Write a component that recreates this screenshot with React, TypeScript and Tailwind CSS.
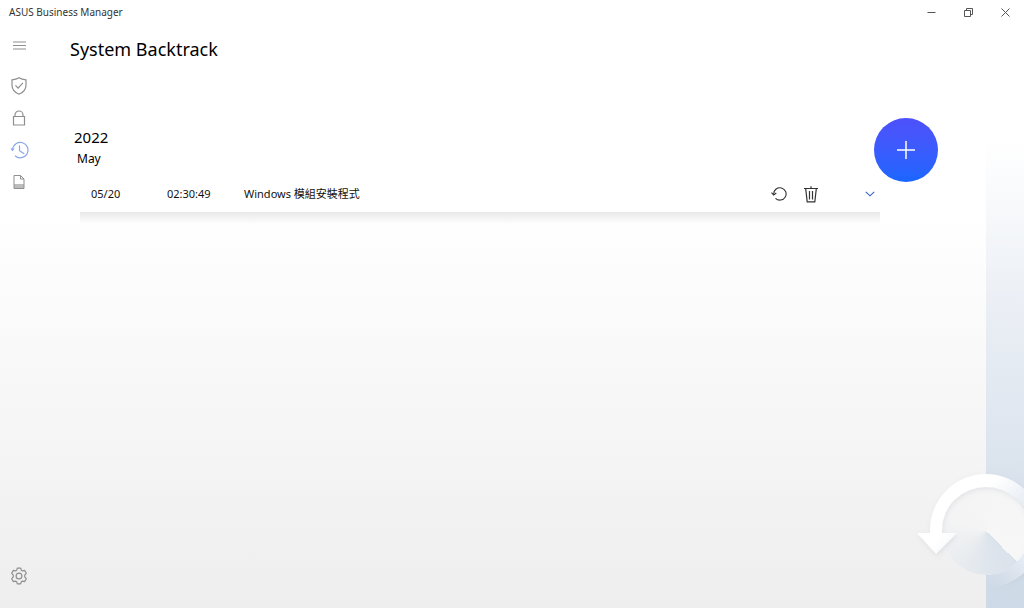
import React, { useState } from 'react';

interface RestorePoint {
  id: string;
  date: string;
  time: string;
  description: string;
}

interface RestoreGroup {
  year: string;
  month: string;
  points: RestorePoint[];
}

const GROUPS: RestoreGroup[] = [
  {
    year: '2022',
    month: 'May',
    points: [{ id: 'rp-1', date: '05/20', time: '02:30:49', description: 'Windows 模組安裝程式' }],
  },
];

const ShieldIcon = () => (
  <svg width="16" height="18" viewBox="0 0 16 18" fill="none" stroke="currentColor" strokeWidth="1.200">
    <path d="M8 .8C6.200 2 3.600 2.700 1 2.800v5.400c0 4.300 2.800 7.200 7 9 4.200-1.800 7-4.700 7-9V2.800C12.400 2.700 9.800 2 8 .8Z" />
    <path d="m4.500 8.400 2.600 2.700 4.800-5.200" />
  </svg>
);

const LockIcon = () => (
  <svg width="14" height="16" viewBox="0 0 14 16" fill="none" stroke="currentColor" strokeWidth="1.200">
    <path d="M1.500 6.500h11v8.500h-11zM3 6.500V5a4 4 0 0 1 8 0v1.500" />
  </svg>
);

const HistoryIcon = () => (
  <svg width="19" height="18" viewBox="0 0 19 18" fill="none" stroke="currentColor">
    <path d="M2.600 8.500A7.700 7.700 0 1 1 5 14.700" strokeWidth="1.200" />
    <path d="M.3 7.600h4.400L2.500 10.300z" fill="currentColor" stroke="none" />
    <path d="M9.500 4.500v5.200l4.700 3" strokeWidth="1.200" />
  </svg>
);

const ReportIcon = () => (
  <svg width="12" height="14" viewBox="0 0 12 14" fill="none" stroke="currentColor">
    <path d="M1 .5h6.500L11 4v9.500H1zM7.500.5V4H11" />
    <path d="M1 9h10v4.500H1z" fill="currentColor" fillOpacity=".6" stroke="none" />
  </svg>
);

const GearIcon = () => (
  <svg width="18" height="18" viewBox="0 0 18 18" fill="none" stroke="currentColor" strokeWidth="1.200" strokeLinejoin="round">
    <path d="M7.300 1.200h3.400l.6 2 1.200.7 2.100-.5 1.700 2.900-1.500 1.500v2.400l1.500 1.500-1.700 2.900-2.100-.5-1.200.7-.6 2H7.300l-.6-2-1.200-.7-2.100.5-1.700-2.900 1.500-1.500V7.800L1.700 6.300l1.700-2.900 2.100.5 1.200-.7z" />
    <circle cx="9" cy="9" r="2.900" />
  </svg>
);

const NAV_ITEMS = [
  { label: 'Security', icon: ShieldIcon },
  { label: 'Lock', icon: LockIcon },
  { label: 'System Backtrack', icon: HistoryIcon },
  { label: 'Report', icon: ReportIcon },
];

const TitleBar = () => (
  <header className="flex h-[25px] items-center justify-between pl-[9px]">
    <span className="text-[10px] text-[#333]">ASUS Business Manager</span>
    <div className="flex h-full text-[#555]">
      <button aria-label="Minimize" className="flex w-[37px] items-center justify-center">
        <svg width="9" height="9" viewBox="0 0 9 9" stroke="currentColor">
          <path d="M.5 4.500h8" />
        </svg>
      </button>
      <button aria-label="Restore" className="flex w-[37px] items-center justify-center">
        <svg width="9" height="9" viewBox="0 0 9 9" fill="none" stroke="currentColor">
          <path d="M.5 2.500h6v6h-6z" />
          <path d="M2.500 2.500v-2h6v6h-2" />
        </svg>
      </button>
      <button aria-label="Close" className="flex w-[37px] items-center justify-center">
        <svg width="9" height="9" viewBox="0 0 9 9" stroke="currentColor">
          <path d="m.5.5 8 8m0-8-8 8" />
        </svg>
      </button>
    </div>
  </header>
);

const SideNav = () => (
  <nav className="flex w-[38px] shrink-0 flex-col pt-1 pb-4 text-[#8f8f8f]">
    <button aria-label="Menu" className="mb-[9px] flex h-8 items-center justify-center">
      <svg width="13" height="9" viewBox="0 0 13 9" stroke="currentColor">
        <path d="M0 1h13M0 4.500h13M0 8h13" />
      </svg>
    </button>
    {NAV_ITEMS.map(({ label, icon: Icon }) => (
      <button
        key={label}
        aria-label={label}
        className={`flex h-8 items-center justify-center ${label === 'System Backtrack' ? 'text-[#8aa6ea]' : ''}`}
      >
        <Icon />
      </button>
    ))}
    <button aria-label="Settings" className="mt-auto flex h-8 items-center justify-center">
      <GearIcon />
    </button>
  </nav>
);

const RestoreRow = ({ point }: { point: RestorePoint }) => {
  const [open, setOpen] = useState(false);

  return (
    <li>
      <div className="flex h-9 items-center pl-[11px] text-[11px] text-[#111]">
        <span className="w-[76px]">{point.date}</span>
        <span className="w-[77px]">{point.time}</span>
        <span className="flex-1">{point.description}</span>
        <div className="flex items-center text-[#333]">
          <button aria-label="Restore" className="flex h-8 w-8 items-center justify-center">
            <svg width="16" height="14" viewBox="0 0 16 14" fill="none" stroke="currentColor" strokeWidth="1.100">
              <path d="M2.700 7.800V7a6.200 6.200 0 1 1 1.800 4.300" />
              <path d="m.5 5.600 2.200 2.500L5.300 6" />
            </svg>
          </button>
          <button aria-label="Delete" className="flex h-8 w-8 items-center justify-center">
            <svg width="14" height="17" viewBox="0 0 14 17" fill="none" stroke="currentColor" strokeWidth="1.200">
              <path d="M0 2.500h14M7 .3v2M1.700 2.700l1.500 13.200h7.600l1.500-13.200" />
              <path d="M5.500 5v8.500M8.500 5v8.500" />
            </svg>
          </button>
          <button
            aria-label="Details"
            aria-expanded={open}
            onClick={() => setOpen(!open)}
            className="ml-[33px] flex h-8 w-5 items-center justify-center text-[#2f62bf]"
          >
            <svg width="10" height="6" viewBox="0 0 10 6" fill="none" stroke="currentColor" strokeWidth="1.100">
              <path d="m.8.8 4.200 4 4.200-4" />
            </svg>
          </button>
        </div>
      </div>
      <div className="h-3 bg-linear-to-b from-[#e8e8e8] to-transparent" />
    </li>
  );
};

const BacktrackArt = () => (
  <svg
    className="pointer-events-none absolute right-0 bottom-0"
    width="114"
    height="144"
    viewBox="910 464 114 144"
    aria-hidden="true"
  >
    <defs>
      <linearGradient id="ring" gradientUnits="userSpaceOnUse" x1="994" y1="480" x2="1032" y2="516">
        <stop offset="0" stopColor="#fff" />
        <stop offset="1" stopColor="#dfe6f0" />
      </linearGradient>
      <linearGradient id="tail" gradientUnits="userSpaceOnUse" x1="988" y1="582" x2="1024" y2="560">
        <stop offset="0" stopColor="#dfe6f0" stopOpacity="0" />
        <stop offset="1" stopColor="#e6ecf5" />
      </linearGradient>
      <filter id="soft" x="-20%" y="-20%" width="140%" height="140%">
        <feDropShadow dx="1" dy="2" stdDeviation="2.500" floodColor="#7f8a99" floodOpacity=".16" />
      </filter>
    </defs>
    <circle cx="986" cy="531" r="44" fill="#f7f7f8" />
    <foreignObject x="942" y="487" width="88" height="88">
      <div className="h-[88px] w-[88px] rounded-full bg-[conic-gradient(from_135deg,#dae2eb_0deg,#e0e6ed_45deg,#eaedf0_90deg,#f4f4f5_150deg,#f7f7f8_360deg)]" />
    </foreignObject>
    <path
      d="M1017.100 562.100A44 44 0 0 1 986 575v12.500A56.500 56.500 0 0 0 1042.500 531H1030a44 44 0 0 1-12.900 31.100z"
      fill="url(#tail)"
      filter="url(#soft)"
    />
    <path
      d="M917 533h13v-3a56 56 0 0 1 112 0h-12a44 43 0 0 0-88 0v3h15l-21 21z"
      fill="url(#ring)"
      filter="url(#soft)"
    />
  </svg>
);

export default function App() {
  return (
    <div className="relative flex min-h-screen flex-col bg-linear-to-b from-white from-35% to-[#eee] font-['Noto_Sans','Noto_Sans_CJK_TC',sans-serif]">
      <TitleBar />
      <div className="flex flex-1">
        <SideNav />
        <main className="flex-1 pt-2 pr-12 pl-8">
          <h1 className="text-lg leading-8 text-black">System Backtrack</h1>
          <div className="mt-[53px] flex items-start">
            <div className="flex-1 pt-[7px]">
              {GROUPS.map(group => (
                <section key={group.year} className="text-black">
                  <h2 className="pl-1 text-[15px] leading-6">{group.year}</h2>
                  <h3 className="pl-[7px] text-xs leading-5">{group.month}</h3>
                  <ul className="mt-[7px] ml-[10px]">
                    {group.points.map(point => (
                      <RestoreRow key={point.id} point={point} />
                    ))}
                  </ul>
                </section>
              ))}
            </div>
            <button
              aria-label="Create restore point"
              className="-ml-[6px] flex h-16 w-16 shrink-0 items-center justify-center rounded-full bg-linear-to-b from-[#4d50fb] to-[#1866ff] text-white"
            >
              <svg width="18" height="18" viewBox="0 0 18 18" stroke="currentColor" strokeWidth="1.500">
                <path d="M9 0v18M0 9h18" />
              </svg>
            </button>
          </div>
        </main>
        <div className="mt-[115px] w-[38px] shrink-0 bg-linear-to-b from-transparent via-[#e4eaf2] to-[#cdd9e6]" />
      </div>
      <BacktrackArt />
    </div>
  );
}
